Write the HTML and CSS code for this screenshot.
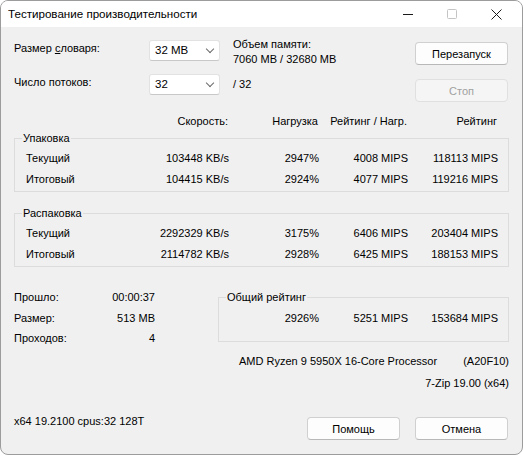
FILE: index.html
```html
<!DOCTYPE html>
<html lang="ru">
<head>
    <meta charset="UTF-8">
    <title>Тестирование производительности</title>
    <link rel="stylesheet" href="styles.css">
</head>
<body>
    <div class="window">
        <div class="titlebar">
            <span class="title">Тестирование производительности</span>
            <div class="caption-buttons">
                <span class="cap-btn">
                    <svg width="10" height="10" viewBox="0 0 10 10"><path d="M0 5.5h10" stroke="#1a1a1a" stroke-width="1"/></svg>
                </span>
                <span class="cap-btn">
                    <svg width="10" height="10" viewBox="0 0 10 10"><rect x="0.5" y="0.5" width="9" height="9" rx="1" fill="none" stroke="#c4c4c4" stroke-width="1"/></svg>
                </span>
                <span class="cap-btn">
                    <svg width="11" height="11" viewBox="0 0 11 11"><path d="M0.5 0.5l10 10M10.5 0.5l-10 10" stroke="#1a1a1a" stroke-width="1"/></svg>
                </span>
            </div>
        </div>

        <div class="content">
            <div class="top">
                <div class="settings">
                    <label>Размер <u>с</u>ловаря:</label>
                    <div class="combo"><span>32 MB</span><span class="arrow"></span></div>
                    <div class="memory">Объем памяти:<br>7060 MB / 32680 MB</div>
                    <label>Число потоков:</label>
                    <div class="combo"><span>32</span><span class="arrow"></span></div>
                    <div class="threads">/ 32</div>
                </div>
                <div class="actions">
                    <button class="btn">Перезапуск</button>
                    <button class="btn" disabled>Стоп</button>
                </div>
            </div>

            <div class="row head">
                <span></span>
                <span>Скорость:</span>
                <span>Нагрузка</span>
                <span>Рейтинг / Нагр.</span>
                <span>Рейтинг</span>
            </div>

            <fieldset class="group">
                <legend>Упаковка</legend>
                <div class="row">
                    <span class="name">Текущий</span>
                    <span>103448 KB/s</span>
                    <span>2947%</span>
                    <span>4008 MIPS</span>
                    <span>118113 MIPS</span>
                </div>
                <div class="row">
                    <span class="name">Итоговый</span>
                    <span>104415 KB/s</span>
                    <span>2924%</span>
                    <span>4077 MIPS</span>
                    <span>119216 MIPS</span>
                </div>
            </fieldset>

            <fieldset class="group unpack">
                <legend>Распаковка</legend>
                <div class="row">
                    <span class="name">Текущий</span>
                    <span>2292329 KB/s</span>
                    <span>3175%</span>
                    <span>6406 MIPS</span>
                    <span>203404 MIPS</span>
                </div>
                <div class="row">
                    <span class="name">Итоговый</span>
                    <span>2114782 KB/s</span>
                    <span>2928%</span>
                    <span>6425 MIPS</span>
                    <span>188153 MIPS</span>
                </div>
            </fieldset>

            <div class="bottom">
                <div class="stats">
                    <span>Прошло:</span><span class="val">00:00:37</span>
                    <span>Размер:</span><span class="val">513 MB</span>
                    <span>Проходов:</span><span class="val">4</span>
                </div>
                <div class="summary">
                    <fieldset class="group total">
                        <legend>Общий рейтинг</legend>
                        <div class="row">
                            <span>2926%</span>
                            <span>5251 MIPS</span>
                            <span>153684 MIPS</span>
                        </div>
                    </fieldset>
                    <div class="cpu">
                        <span>AMD Ryzen 9 5950X 16-Core Processor</span>
                        <span>(A20F10)</span>
                    </div>
                    <div class="version">7-Zip 19.00 (x64)</div>
                </div>
            </div>

            <div class="footer">
                <span class="sysinfo">x64 19.2100 cpus:32 128T</span>
                <div class="footer-buttons">
                    <button class="btn">Помощь</button>
                    <button class="btn">Отмена</button>
                </div>
            </div>
        </div>
    </div>
</body>
</html>
```

FILE: styles.css
```css
body {
    margin: 0;
    background-color: #ffffff;
    font-family: "Liberation Sans", Arial, sans-serif;
    font-size: 11px;
    color: #000000;
}
.window {
    width: 521px;
    height: 453px;
    border: 1px solid #9c9c9c;
    border-radius: 8px;
    overflow: hidden;
    background-color: #f0f0f0;
    display: flex;
    flex-direction: column;
}
.titlebar {
    height: 26px;
    background-color: #ffffff;
    display: flex;
    align-items: center;
    justify-content: space-between;
}
.title {
    padding-left: 7px;
    padding-bottom: 1px;
    font-size: 11.6px;
}
.caption-buttons {
    display: flex;
    margin-right: 4px;
}
.cap-btn {
    width: 44px;
    height: 26px;
    display: flex;
    align-items: center;
    justify-content: center;
}
.content {
    padding: 13px 13px 0 13px;
    line-height: 15px;
}
.top {
    display: flex;
    justify-content: space-between;
}
.settings {
    display: grid;
    grid-template-columns: 135px 71px auto;
    grid-template-rows: 21px 21px;
    row-gap: 13px;
    align-items: center;
}
.settings label {
    margin-top: -4px;
}
.combo {
    height: 19px;
    background-color: #ffffff;
    border: 1px solid #e2e2e2;
    border-bottom-color: #c8c8c8;
    border-radius: 3px;
    display: flex;
    align-items: center;
    justify-content: space-between;
    padding: 0 6px 0 5px;
    font-size: 11.5px;
}
.combo .arrow {
    width: 5px;
    height: 5px;
    border-right: 1px solid #6b6b6b;
    border-bottom: 1px solid #6b6b6b;
    transform: rotate(45deg);
    margin-top: -4px;
}
.memory {
    align-self: start;
    margin: -3px 0 0 13px;
}
.threads {
    margin-left: 13px;
}
.actions {
    display: flex;
    flex-direction: column;
    gap: 14px;
    padding-top: 2px;
    margin-right: 1px;
}
.btn {
    width: 93px;
    height: 23px;
    font-family: inherit;
    font-size: 11px;
    color: #000000;
    background-color: #fdfdfd;
    border: 1px solid #d0d0d0;
    border-bottom-color: #b8b8b8;
    border-radius: 4px;
    padding: 0;
}
.btn:disabled {
    color: #a0a0a0;
    background-color: #f5f5f5;
    border-color: #e0e0e0;
}
.row {
    display: grid;
    grid-template-columns: 130px 84px 90px 89px 90px;
    height: 21px;
    align-items: center;
    text-align: right;
}
.row .name {
    text-align: left;
    padding-left: 11px;
}
.head {
    margin-top: 12px;
    height: 15px;
}
.group {
    margin: 2px 0 0 0;
    padding: 0 0 1px 0;
    border: 1px solid #dcdcdc;
    border-radius: 0;
}
.group legend {
    margin-left: 7px;
    padding: 0 1px;
    line-height: 15px;
}
.group legend + .row {
    margin-top: 2px;
}
.unpack {
    margin-top: 14px;
}
.bottom {
    display: grid;
    grid-template-columns: 204px 1fr;
    margin-top: 23px;
}
.stats {
    display: grid;
    grid-template-columns: 80px 61px;
    grid-auto-rows: 20.5px;
    align-content: start;
}
.stats .val {
    text-align: right;
}
.total {
    margin-top: 0;
    padding-bottom: 12px;
}
.total legend + .row {
    margin-top: 3px;
}
.total .row {
    grid-template-columns: 100px 89px 90px;
}
.cpu {
    display: flex;
    justify-content: space-between;
    padding-left: 21px;
    margin-top: 12px;
}
.version {
    text-align: right;
    margin-top: 7px;
}
.footer {
    display: flex;
    justify-content: space-between;
    margin-top: 26px;
}
.sysinfo {
    margin-top: -3px;
}
.footer-buttons {
    display: flex;
    gap: 15px;
    margin-right: 1px;
}
```
